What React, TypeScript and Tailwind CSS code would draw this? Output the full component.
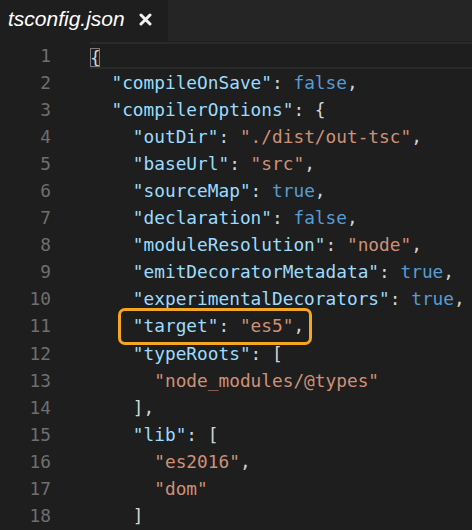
import React from "react";

type Tok = [string, string];

const K = "text-[#9cdcfe]";
const S = "text-[#ce9178]";
const B = "text-[#569cd6]";
const P = "text-[#d4d4d4]";

const lines: Tok[][] = [
  [["{", P]],
  [["  ", P], ['"compileOnSave"', K], [": ", P], ["false", B], [",", P]],
  [["  ", P], ['"compilerOptions"', K], [": {", P]],
  [["    ", P], ['"outDir"', K], [": ", P], ['"./dist/out-tsc"', S], [",", P]],
  [["    ", P], ['"baseUrl"', K], [": ", P], ['"src"', S], [",", P]],
  [["    ", P], ['"sourceMap"', K], [": ", P], ["true", B], [",", P]],
  [["    ", P], ['"declaration"', K], [": ", P], ["false", B], [",", P]],
  [["    ", P], ['"moduleResolution"', K], [": ", P], ['"node"', S], [",", P]],
  [["    ", P], ['"emitDecoratorMetadata"', K], [": ", P], ["true", B], [",", P]],
  [["    ", P], ['"experimentalDecorators"', K], [": ", P], ["true", B], [",", P]],
  [["    ", P], ['"target"', K], [": ", P], ['"es5"', S], [",", P]],
  [["    ", P], ['"typeRoots"', K], [": [", P]],
  [["      ", P], ['"node_modules/@types"', S]],
  [["    ],", P]],
  [["    ", P], ['"lib"', K], [": [", P]],
  [["      ", P], ['"es2016"', S], [",", P]],
  [["      ", P], ['"dom"', S]],
  [["    ]", P]],
];

export default function App() {
  return (
    <div className="w-[472px] h-[530px] bg-[#1e1e1e] overflow-hidden">
      <div className="h-[41px] flex bg-[#252526]">
        <div
          className="w-[168px] bg-[#1e1e1e] flex items-center pl-[8px] gap-[14px] text-white"
          style={{ fontFamily: '"Liberation Sans", Arial, sans-serif' }}
        >
          <span className="italic text-[21px] leading-none pb-[4px]">tsconfig.json</span>
          <svg width="13" height="13" viewBox="0 0 13 13" className="mb-[2px]">
            <path d="M2 2 L11 11 M11 2 L2 11" stroke="#f2f2f2" strokeWidth="3" strokeLinecap="round" />
          </svg>
        </div>
        <div className="flex-1" />
      </div>
      <div
        className="pt-[1px] text-[17.8px]"
        style={{ fontFamily: '"DejaVu Sans Mono", "Liberation Mono", monospace' }}
      >
        {lines.map((toks, i) => (
          <div key={i} className="flex h-[27.06px] leading-[27.06px]">
            <div className="w-[51px] text-right text-[#6f6f6f] shrink-0">{i + 1}</div>
            <div className="w-[39px] shrink-0" />
            <div
              className={
                "relative flex-1 whitespace-pre " +
                (i === 0 ? "border-y-2 border-[#2a2a2a]" : "")
              }
            >
              {i === 0 ? (
                <span className="relative text-[#d4d4d4]">
                  <span className="absolute left-0 top-[1px] bottom-[1px] w-[10px] border border-[#7a7a7a]" />
                  {"{"}
                </span>
              ) : (
                toks.map(([t, c], j) => (
                  <span key={j} className={c}>
                    {t}
                  </span>
                ))
              )}
              {i === 10 && (
                <div className="absolute left-[28px] top-[-4px] w-[194px] h-[37px] border-[3px] border-[#f5a623] rounded-[7px]" />
              )}
            </div>
          </div>
        ))}
      </div>
    </div>
  );
}
